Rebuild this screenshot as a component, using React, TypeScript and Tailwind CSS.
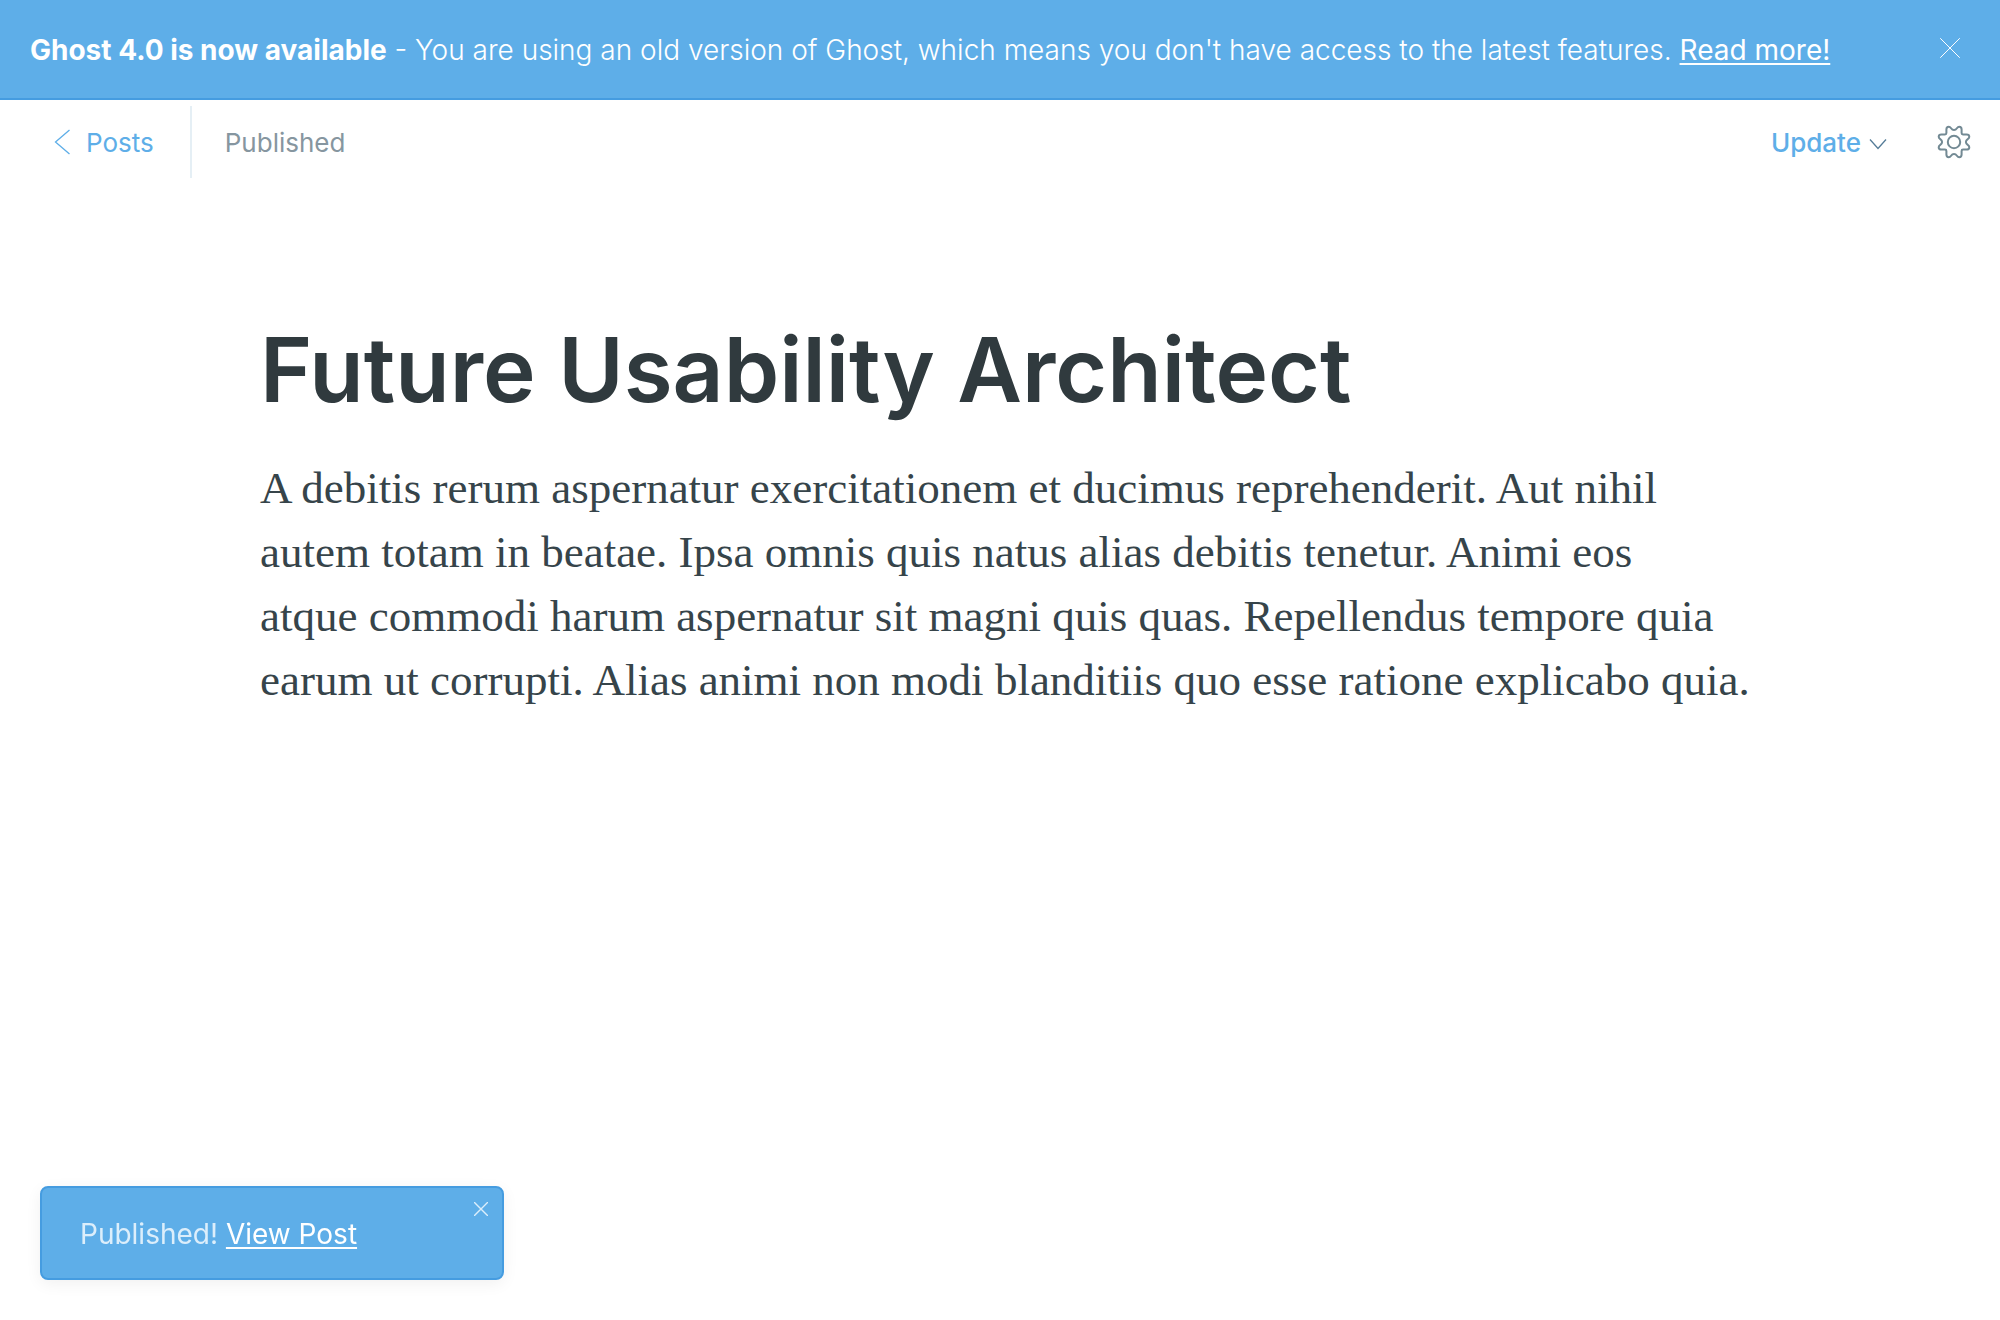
import React from 'react'

function CloseIcon({ className, strokeWidth }: { className: string; strokeWidth: number }) {
  return (
    <svg viewBox="0 0 20 20" fill="none" stroke="currentColor" strokeWidth={strokeWidth} strokeLinecap="round" className={className} aria-hidden="true">
      <path d="M.5 .5l19 19M19.5 .5l-19 19" />
    </svg>
  )
}

function GearIcon() {
  return (
    <svg viewBox="-17 -17 34 34" fill="none" stroke="currentColor" strokeWidth="2" strokeLinejoin="round" className="size-[34px]" aria-hidden="true">
      <circle r="6.2" />
      <path d="M-7.6 -9V-12.6C-7.6 -14.6 -6.4 -15.3 -5.2 -15.3C-2.6 -15.3 -3.2 -11.9 0 -11.9C3.2 -11.9 2.6 -15.3 5.2 -15.3C6.4 -15.3 7.6 -14.6 7.6 -12.6V-9Q7.6 -7.6 9 -7.6H12.6C14.6 -7.6 15.3 -6.4 15.3 -5.2C15.3 -2.6 11.9 -3.2 11.9 0C11.9 3.2 15.3 2.6 15.3 5.2C15.3 6.4 14.6 7.6 12.6 7.6H9Q7.6 7.6 7.6 9V12.6C7.6 14.6 6.4 15.3 5.2 15.3C2.6 15.3 3.2 11.9 0 11.9C-3.2 11.9 -2.6 15.3 -5.2 15.3C-6.4 15.3 -7.6 14.6 -7.6 12.6V9Q-7.6 7.6 -9 7.6H-12.6C-14.6 7.6 -15.3 6.4 -15.3 5.2C-15.3 2.6 -11.9 3.2 -11.9 0C-11.9 -3.2 -15.3 -2.6 -15.3 -5.2C-15.3 -6.4 -14.6 -7.6 -12.6 -7.6H-9Q-7.6 -7.6 -7.6 -9Z" />
    </svg>
  )
}

function UpgradeBanner() {
  return (
    <aside className="flex items-center justify-between border-b-2 border-[#459ce0] bg-[#5eaee8] pr-10 pl-[30px] text-[28px] leading-[96px] font-light text-white">
      <p className="pt-[2px]">
        <strong className="font-bold">Ghost 4.0 is now available</strong> - You are using an old version of Ghost, which means you don't have access to the latest features.{' '}
        <a href="#upgrade" className="font-normal underline decoration-2 underline-offset-3">Read more!</a>
      </p>
      <button type="button" aria-label="Dismiss" className="mb-[2px] shrink-0">
        <CloseIcon className="size-5" strokeWidth={1} />
      </button>
    </aside>
  )
}

function EditorHeader() {
  return (
    <header className="flex items-center justify-between pr-[29px] pl-7 pt-[6px] text-[26px] leading-[70px]">
      <div className="flex items-center">
        <a href="#posts" className="flex items-center gap-4 border-r-2 border-[#e5eff5] pr-[36px] pl-[26px] text-[#5eaee8]">
          <svg viewBox="0 0 16 26" fill="none" stroke="currentColor" strokeWidth="1.3" className="h-[26px] w-4" aria-hidden="true">
            <path d="M15.5 1L1.5 13l14 12" />
          </svg>
          <span className="pt-[2px]">Posts</span>
        </a>
        <span className="pt-[2px] pl-[33px] text-[#8696a0]">Published</span>
      </div>
      <div className="flex items-center gap-[50px]">
        <button type="button" className="flex items-center gap-2 font-medium text-[#5eaee8]">
          <span className="pt-[2px]">Update</span>
          <svg viewBox="0 0 18 12" fill="none" stroke="#557c98" strokeWidth="1.3" className="mt-1 h-3 w-[18px]" aria-hidden="true">
            <path d="M1 1.5l8 9 8-9" />
          </svg>
        </button>
        <button type="button" aria-label="Settings" className="text-[#738a94]">
          <GearIcon />
        </button>
      </div>
    </header>
  )
}

export default function App() {
  return (
    <div className="flex min-h-screen flex-col bg-white font-['Inter',sans-serif]">
      <UpgradeBanner />
      <EditorHeader />
      <main className="mx-auto w-full max-w-[1480px] grow pt-[132px]">
        <h1 className="text-[89px] leading-[120px] font-semibold text-[#303a3e]">Future Usability Architect</h1>
        <p className="-mr-8 mt-[26px] font-['Liberation_Serif',serif] text-[45px] leading-[64px] text-[#36444a]">
          A debitis rerum aspernatur exercitationem et ducimus reprehenderit. Aut nihil
          <br />
          autem totam in beatae. Ipsa omnis quis natus alias debitis tenetur. Animi eos
          <br />
          atque commodi harum aspernatur sit magni quis quas. Repellendus tempore quia
          <br />
          earum ut corrupti. Alias animi non modi blanditiis quo esse ratione explicabo quia.
        </p>
      </main>
      <div role="status" className="fixed bottom-10 left-10 flex w-[464px] items-start justify-between rounded-lg border-2 border-[#459ce0] bg-[#5eaee8] pr-[14px] pl-[38px] text-[28px] leading-[88px] text-white shadow-[0_4px_16px_rgba(0,0,0,0.06)]">
        <p className="pt-[2px]">
          <span className="text-[#dceefb]">Published!</span>{' '}
          <a href="#post" className="underline decoration-2 underline-offset-3">View Post</a>
        </p>
        <button type="button" aria-label="Close" className="mt-[14px] text-[#dceefb]">
          <CloseIcon className="size-[14px]" strokeWidth={2} />
        </button>
      </div>
    </div>
  )
}
